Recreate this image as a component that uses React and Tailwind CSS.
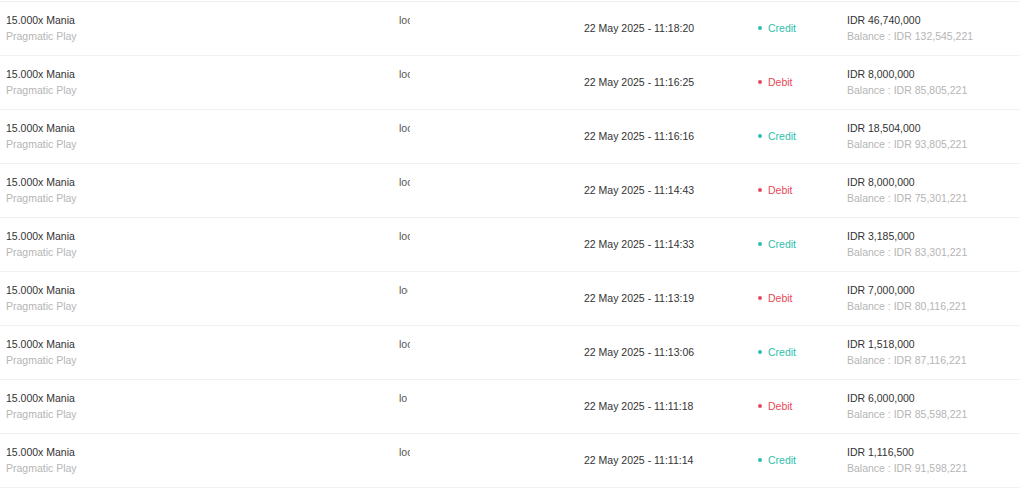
import React from "react";

const rows = [
  { lo: 11, time: "11:18:20", type: "Credit", amt: "46,740,000", bal: "132,545,221" },
  { lo: 11, time: "11:16:25", type: "Debit", amt: "8,000,000", bal: "85,805,221" },
  { lo: 11, time: "11:16:16", type: "Credit", amt: "18,504,000", bal: "93,805,221" },
  { lo: 11, time: "11:14:43", type: "Debit", amt: "8,000,000", bal: "75,301,221" },
  { lo: 11, time: "11:14:33", type: "Credit", amt: "3,185,000", bal: "83,301,221" },
  { lo: 9, time: "11:13:19", type: "Debit", amt: "7,000,000", bal: "80,116,221" },
  { lo: 11, time: "11:13:06", type: "Credit", amt: "1,518,000", bal: "87,116,221" },
  { lo: 8, time: "11:11:18", type: "Debit", amt: "6,000,000", bal: "85,598,221" },
  { lo: 11, time: "11:11:14", type: "Credit", amt: "1,116,500", bal: "91,598,221" },
];

export default function App() {
  return (
    <div
      className="w-[1024px] h-[491px] bg-white overflow-hidden pt-px"
      style={{ fontFamily: '"Liberation Sans", Arial, sans-serif' }}
    >
      <div className="w-[1020px] border-t border-[#f1f1f1]">
        {rows.map((r, i) => (
          <div
            key={i}
            className="grid grid-cols-[393px_185px_173px_90px_1fr] h-[54px] pl-[6px] pt-[10px] border-b border-[#f1f1f1] text-[10.5px] leading-[16px]"
          >
            <div>
              <div className="text-[#333333]">15.000x Mania</div>
              <div className="text-[#b5b5b5]">Pragmatic Play</div>
            </div>
            <div>
              <div
                className="text-[#555555] overflow-hidden whitespace-nowrap"
                style={{ width: r.lo }}
              >
                loc
              </div>
            </div>
            <div className="text-[#333333] mt-[8px]">22 May 2025 - {r.time}</div>
            <div
              className={
                "flex items-center gap-[5px] h-[16px] mt-[8px] " +
                (r.type === "Credit" ? "text-[#2bbfad]" : "text-[#e8495a]")
              }
            >
              <span
                className={
                  "inline-block w-[4px] h-[4px] rounded-full ml-[1px] " +
                  (r.type === "Credit" ? "bg-[#2bbfad]" : "bg-[#e8495a]")
                }
              />
              <span className="ml-[1px]">{r.type}</span>
            </div>
            <div>
              <div className="text-[#333333]">IDR {r.amt}</div>
              <div className="text-[#b5b5b5]">Balance : IDR {r.bal}</div>
            </div>
          </div>
        ))}
      </div>
    </div>
  );
}
